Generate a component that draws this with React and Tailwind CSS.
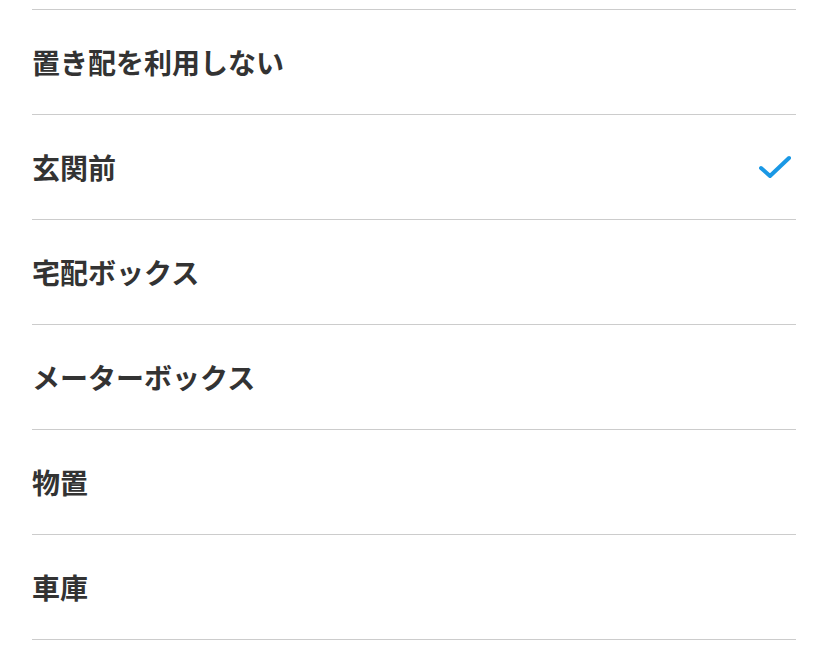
const OPTIONS = [
  "置き配を利用しない",
  "玄関前",
  "宅配ボックス",
  "メーターボックス",
  "物置",
  "車庫",
];

const CheckIcon = () => (
  <svg width="34" height="26" viewBox="0 0 34 26" fill="none">
    <path
      d="M3 14l9 8L31 4"
      stroke="#1a98e5"
      strokeWidth="4"
      strokeLinecap="round"
      strokeLinejoin="round"
    />
  </svg>
);

export default function App() {
  const selected = "玄関前";

  return (
    <div
      className="min-h-screen bg-white pt-[9px]"
      style={{ fontFamily: "'Noto Sans CJK JP', 'Noto Sans', sans-serif" }}
    >
      <ul className="mx-[32px] border-t border-[#cccccc]">
        {OPTIONS.map((label) => (
          <li
            key={label}
            className="flex h-[105px] items-center justify-between border-b border-[#cccccc]"
          >
            <span className="text-[28px] font-bold leading-none text-[#333333]">
              {label}
            </span>
            {label === selected && (
              <span className="mr-[4px]">
                <CheckIcon />
              </span>
            )}
          </li>
        ))}
      </ul>
    </div>
  );
}
